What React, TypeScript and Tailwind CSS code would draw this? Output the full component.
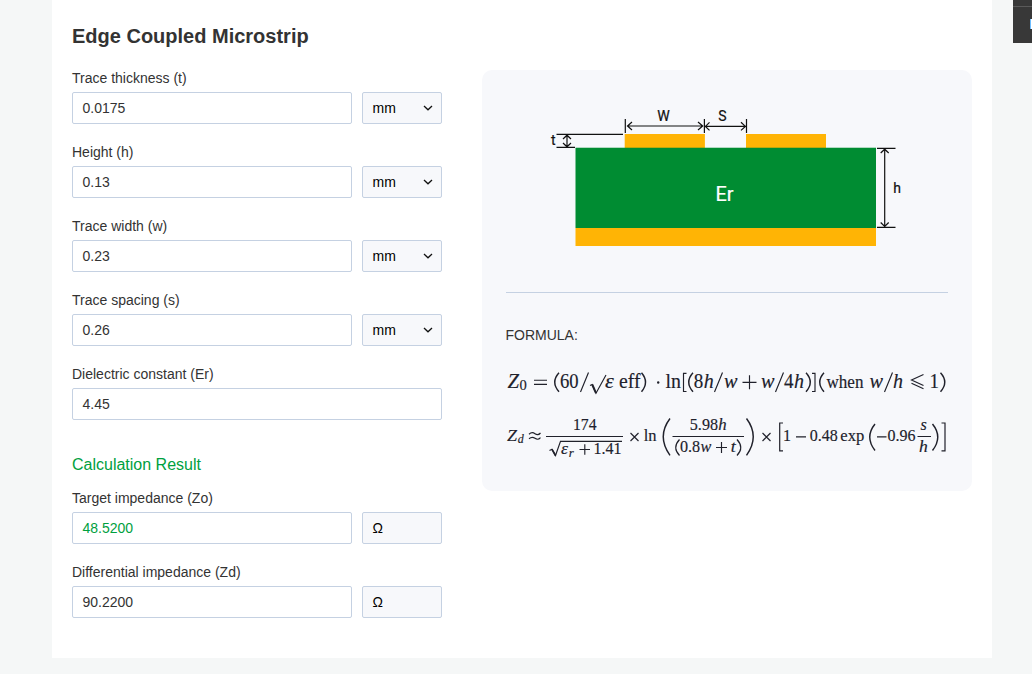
import React from "react";

type FieldProps = {
  label: string;
  value: string;
  unit?: string;
  select?: boolean;
  highlight?: boolean;
};

function Field({ label, value, unit, select, highlight }: FieldProps) {
  return (
    <div className="flex h-[74px] flex-col">
      <label className="h-6 text-[14px] leading-[20px] text-[#333]">{label}</label>
      <div className="flex gap-[10px]">
        <div
          className={
            "flex h-8 flex-1 items-center rounded-[2px] border border-[#c5d1e2] bg-white pl-[9.5px] text-[14px] " +
            (highlight ? "text-[#00a03e]" : "text-[#333]")
          }
        >
          {value}
        </div>
        {unit && (
          <div className="flex h-8 w-20 items-center justify-between rounded-[2px] border border-[#c5d1e2] bg-[#f7f8fb] pr-2 pl-[9.5px] text-[14px] text-black">
            <span>{unit}</span>
            {select && (
              <svg width="10" height="6" viewBox="0 0 10 6" fill="none" stroke="#111" strokeWidth="1.3">
                <path d="M1 1 5 4.8 9 1" />
              </svg>
            )}
          </div>
        )}
      </div>
    </div>
  );
}

function Diagram() {
  return (
    <svg className="block h-[150px] w-[380px]" viewBox="540 100 380 150" fontFamily="Roboto, sans-serif">
      <rect x="575.5" y="148" width="300.5" height="80" fill="#008c32" />
      <rect x="575.5" y="228" width="300.5" height="18" fill="#ffb405" />
      <rect x="624.7" y="134" width="80.2" height="14" fill="#ffb405" />
      <rect x="746" y="134" width="80" height="14" fill="#ffb405" />
      <rect x="575.5" y="147.3" width="300.5" height="0.7" fill="#008c32" opacity="0.4" />
      <g stroke="#111" fill="none" strokeWidth="1.2">
        <path d="M556.5 134.4H623M556.5 147.4H575M877 148.4H895.5M877 227.4H895.5" />
        <path d="M625.3 119V133M704.4 119V133M746.5 119V133" />
        <path d="M627 126H703M632 122 627.5 126 632 130M698 122 702.7 126 698 130" />
        <path d="M705 126.4H746M709.5 122.3 705.4 126.4 709.5 130.4M741 122.3 745.4 126.4 741 130.4" />
        <path d="M567 135V147M563 139 567 135.2 571 139M563 143 567 146.8 571 143" />
        <path d="M884.7 149V227M880.7 153 884.7 149.2 888.7 153M880.7 222.5 884.7 226.5 888.7 222.5" />
      </g>
      <g fill="#111" stroke="#111" strokeWidth="0.2" fontSize="14">
        <text x="657.3" y="121" textLength="12.5" lengthAdjust="spacingAndGlyphs">W</text>
        <text x="718.2" y="121">S</text>
        <text x="551" y="145">t</text>
        <text x="893.2" y="193">h</text>
      </g>
      <text x="715.5" y="201" fontSize="19.5" fill="#fff" stroke="#fff" strokeWidth="0.2" textLength="18" lengthAdjust="spacingAndGlyphs">Er</text>
    </svg>
  );
}

type GlyphProps = { x: number; y: number; w: number; s: number; i?: boolean; t: string };

function M({ x, y, w, s, i, t }: GlyphProps) {
  return (
    <text x={x} y={y} fontSize={s} fontStyle={i ? "italic" : "normal"} textLength={w} lengthAdjust="spacingAndGlyphs">
      {t}
    </text>
  );
}

function Formulas() {
  const a = 387.6;
  const b = 440.8;
  return (
    <svg
      className="block h-[110px] w-[450px]"
      viewBox="500 360 450 110"
      fill="#20212b"
      fontFamily="'Liberation Serif', serif"
    >
      <g stroke="#20212b" strokeWidth="0.15">
        <M x={507.5} y={a} w={11.5} s={20} i t="Z" />
        <M x={519.5} y={390.3} w={7.3} s={14} t="0" />
        <M x={560} y={a} w={18.6} s={20} t="60" />
        <M x={605} y={a} w={8.8} s={20} i t="ε" />
        <M x={619} y={a} w={21.5} s={20} t="eff" />
        <M x={665.5} y={a} w={15.5} s={20} t="ln" />
        <M x={693.8} y={a} w={9.5} s={20} t="8" />
        <M x={703.8} y={a} w={10} s={20} i t="h" />
        <M x={724} y={a} w={13.5} s={20} i t="w" />
        <M x={761} y={a} w={13.5} s={20} i t="w" />
        <M x={784} y={a} w={9.5} s={20} t="4" />
        <M x={794} y={a} w={10} s={20} i t="h" />
        <M x={826.5} y={a} w={37} s={18} t="when" />
        <M x={869.5} y={a} w={13.5} s={20} i t="w" />
        <M x={893} y={a} w={10} s={20} i t="h" />
        <M x={929.5} y={a} w={9.5} s={20} t="1" />
        <M x={507} y={b} w={10} s={16} i t="Z" />
        <M x={517.8} y={443.4} w={6} s={11.5} i t="d" />
        <M x={573} y={430.2} w={23.5} s={16} t="174" />
        <M x={561} y={454.4} w={7} s={16} i t="ε" />
        <M x={568.8} y={456.8} w={5} s={11.5} i t="r" />
        <M x={593.5} y={454.4} w={28} s={16} t="1.41" />
        <M x={643.8} y={b} w={12.8} s={16} t="ln" />
        <M x={689.8} y={430.2} w={28.2} s={16} t="5.98" />
        <M x={718.3} y={430.2} w={8.4} s={16} i t="h" />
        <M x={680} y={452} w={20.2} s={16} t="0.8" />
        <M x={700.5} y={452} w={10.8} s={16} i t="w" />
        <M x={730.8} y={452} w={5} s={16} i t="t" />
        <M x={783} y={b} w={8} s={16} t="1" />
        <M x={809.8} y={b} w={28} s={16} t="0.48" />
        <M x={840.3} y={b} w={24} s={16} t="exp" />
        <M x={887.5} y={b} w={28} s={16} t="0.96" />
        <M x={920.5} y={430.2} w={6.3} s={16} i t="s" />
        <M x={919} y={451.8} w={8.8} s={16} i t="h" />
      </g>
      <g fill="none" stroke="#20212b" strokeWidth="1.15">
        {/* operators and delimiters of the first line */}
        <path d="M534 380.2H547M534 384.4H547M742.5 382.3H756.5M749.5 375.3V389.3" />
        <path d="M580.5 392 588.5 372.5M714.5 392 722.5 372.5M775.5 392 783.5 372.5M884.5 392 892.5 372.5" />
        <path d="M559 372.7Q550.5 382 559 391.8M641.5 372.7Q649.5 382 641.5 391.8M693 372.7Q684.5 382 693 391.8M806 372.7Q814.5 382 806 391.8M824 372.7Q815.5 382 824 391.8M940.5 372.7Q949 382 940.5 391.8" strokeWidth="1.45" />
        <path d="M686.5 373.3H683.5V391.5H686.5M812 373.3H815V391.5H812" />
        <path d="M590 385.5 592.2 384.5 596 393.2 606 375" />
        <path d="M592.2 384.5 596 393.2" strokeWidth="2" />
        <path d="M923.5 374.5 911.5 380 923.5 385.5M911.5 383.3 923.5 388.8" />
        {/* fraction bars and radical of the second line */}
        <path d="M546 436.5H623M672.5 436.5H744M917.5 436.5H931" strokeWidth="1" />
        <path d="M549.5 450.5 552 449.3 555.5 455.5 560.5 441.3H622" />
        <path d="M552 449.3 555.5 455.5" strokeWidth="1.7" />
        <path d="M529 434.2Q532 431.5 535 433.7T540.5 433M529 438.8Q532 436.1 535 438.3T540.5 437.6" />
        <path d="M579.5 449.5H590M584.8 444.3V454.7M716 447.5H727M721.5 442V453M796 436.8H806M877 436.8H886.5" />
        <path d="M630.5 433 638.5 441M638.5 433 630.5 441M762.5 433 770.5 441M770.5 433 762.5 441" />
        <path d="M679.5 439.5Q672 447.5 679.5 455.5M737 439.5Q744.5 447.5 737 455.5" strokeWidth="1.25" />
        <path d="M670 418.5Q656.5 436.5 670 455.3M746.5 418.5Q760 436.5 746.5 455.3M875 424Q864.5 437 875 450.5M932.5 424Q943 437 932.5 450.5" strokeWidth="1.45" />
        <path d="M783 423H779.7V450.8H783M941.5 423H945V450.8H941.5" strokeWidth="1.2" />
      </g>
      <circle cx="658.2" cy="382.5" r="1.2" />
    </svg>
  );
}

export default function App() {
  return (
    <div className="flex h-[674px] w-[1032px] items-start overflow-hidden bg-[#f5f7f7] pl-[52px] font-['Liberation_Sans',Arial,sans-serif]">
      <main className="flex h-[658px] w-[940px] shrink-0 flex-col bg-white px-5">
        <h1 className="h-[68px] pt-[22px] text-[20px] leading-[28px] font-bold text-[#333]">Edge Coupled Microstrip</h1>
        <div className="flex items-start gap-10">
          <section className="w-[370px]">
            <Field label="Trace thickness (t)" value="0.0175" unit="mm" select />
            <Field label="Height (h)" value="0.13" unit="mm" select />
            <Field label="Trace width (w)" value="0.23" unit="mm" select />
            <Field label="Trace spacing (s)" value="0.26" unit="mm" select />
            <Field label="Dielectric constant (Er)" value="4.45" />
            <h2 className="h-[50px] pt-[15px] text-[16px] leading-[24px] text-[#00a03e]">Calculation Result</h2>
            <Field label="Target impedance (Zo)" value="48.5200" unit="Ω" highlight />
            <Field label="Differential impedance (Zd)" value="90.2200" unit="Ω" />
          </section>
          <section className="mt-[2px] h-[421px] w-[490px] shrink-0 rounded-[10px] bg-[#f7f8fb] pt-[30px]">
            <div className="pl-[58px]">
              <Diagram />
            </div>
            <div className="mx-6 mt-[42px] h-px bg-[#c5d1e2]" />
            <p className="mt-8 ml-[23.5px] h-[35px] text-[14px] leading-[20px] text-[#333]">FORMULA:</p>
            <div className="pl-[18px]">
              <Formulas />
            </div>
          </section>
        </div>
      </main>
      <aside className="ml-[21px] flex h-[43px] w-[19px] shrink-0 flex-col bg-[#383838]">
        <div className="mt-[6px] h-px bg-[#5a5a5a]" />
        <div className="mt-3 ml-[17px] flex h-[10px] w-[2px] bg-white">
          <div className="w-px bg-[#6dbdff]" />
        </div>
      </aside>
    </div>
  );
}
